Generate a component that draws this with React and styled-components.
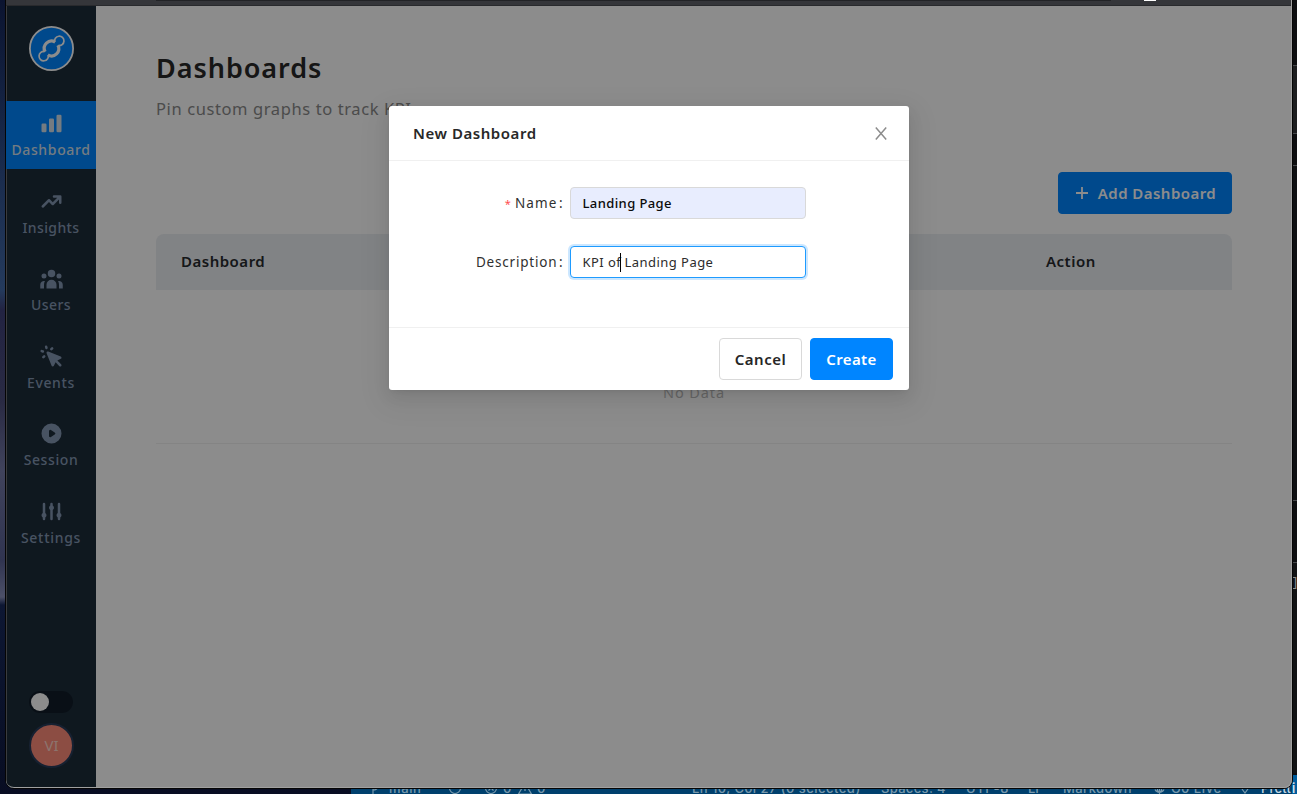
import React from "react";
import styled, { createGlobalStyle } from "styled-components";
import {
  HiChartBar,
  HiTrendingUp,
  HiUserGroup,
  HiCursorClick,
  HiPlay,
  HiAdjustments,
} from "react-icons/hi";

const Global = createGlobalStyle`
  * { box-sizing: border-box; }
  body { margin: 0; overflow: hidden; font-family: "Noto Sans", sans-serif; }
  button, input { font-family: inherit; margin: 0; }
  h1, h2, p { margin: 0; }
`;

const Desktop = styled.div`
  position: relative;
  width: 1297px;
  height: 794px;
  overflow: hidden;
  display: flex;
  background: linear-gradient(180deg, #0b1430 0, #18294a 150px, #243a5c 290px, #222342 310px, #292a43 400px, #40435c 470px, #303450 560px, #4c5068 597px, #0d1733 605px, #080d22 794px);
`;

const StatusBar = styled.footer`
  position: absolute;
  left: 351px;
  top: 775px;
  width: 946px;
  height: 22px;
  background: #00406d;
  color: #7798ac;
  font: 13px/26px Inter, sans-serif;
`;

/* Each entry hangs off the cropped bar below the window. */
const StatusText = styled.span`
  position: absolute;
  left: ${(p) => p.$x - 351}px;
  white-space: pre;
  font-weight: 500;
  letter-spacing: ${(p) => p.$ls || 0}px;
  color: ${(p) => p.$color || "inherit"};
`;

const StatusGlyphs = styled.svg`
  position: absolute;
  left: 0;
  top: 0;
`;

const EditorEdge = styled.aside`
  position: absolute;
  right: 0;
  top: 0;
  width: 6px;
  height: 775px;
  background: #0d0e10;
  color: #8b8b8b;
  font: 13px/16px "Liberation Mono", monospace;
  display: flex;
  flex-direction: column;
  overflow: hidden;
`;

const EditorBlock = styled.div`
  flex: none;
  height: ${(p) => p.$h}px;
  background: ${(p) => p.$bg || "transparent"};
  border-top: 1px solid #46484b;
  padding-top: ${(p) => p.$pt || 0}px;
`;

const EdgeSpacer = styled.div`
  flex: none;
  height: 65px;
`;

const StatusEdge = styled.div`
  position: absolute;
  right: 0;
  top: 775px;
  width: 5px;
  height: 19px;
  background: #005c9c;
  color: #e5eef5;
  font: 500 13px/26px Inter, sans-serif;
  overflow: hidden;
`;

const Window = styled.div`
  position: relative;
  margin-left: 6px;
  width: 1286px;
  height: 788px;
  display: flex;
  flex-direction: column;
  background: #fff;
  border-radius: 0 0 8px 8px;
  overflow: hidden;
  box-shadow: 0 0 0 1px #050505;
`;

const WindowLine = styled.div`
  position: absolute;
  inset: 0;
  border: 1px solid #a0a0a0;
  border-top: 0;
  border-left: 0;
  border-radius: 0 0 8px 8px;
  pointer-events: none;
`;

const BrowserStrip = styled.div`
  flex: none;
  height: 6px;
  background: #35363a;
  border-bottom: 1px solid #292a2d;
  display: flex;
  justify-content: space-between;
  padding: 0 136px 0 150px;
`;

const StripTab = styled.span`
  width: ${(p) => p.$w}px;
  height: 1px;
  background: ${(p) => p.$bg};
`;

const AppArea = styled.div`
  position: relative;
  flex: 1;
  display: flex;
  min-height: 0;
`;

const Sidebar = styled.nav`
  width: 90px;
  background: #1d2c3a;
  box-shadow: inset 1px 0 0 #6a6e73;
  display: flex;
  flex-direction: column;
  align-items: stretch;
  padding-top: 19px;
  padding-bottom: 20px;
`;

const Logo = styled.svg`
  flex: none;
  width: 46px;
  height: 46px;
  margin: 0 auto 30px 22px;
  overflow: visible;
`;

const NavItem = styled.a`
  height: 68px;
  margin-bottom: 9.5px;
  padding-top: 9.5px;
  display: flex;
  flex-direction: column;
  align-items: center;
  color: ${(p) => (p.$active ? "#d3e0ec" : "#8498b2")};
  background: ${(p) => (p.$active ? "#0085ff" : "transparent")};
  font-size: 14px;
  line-height: 20px;
  font-weight: 500;
  letter-spacing: ${(p) => p.$ls}px;
  svg { width: 25px; height: 25px; margin: 0.5px 0 4px 0.5px; }
`;

const NavFoot = styled.div`
  margin-top: auto;
  padding-left: 23px;
  display: flex;
  flex-direction: column;
  gap: 10px;
`;

const Toggle = styled.div`
  width: 44px;
  height: 22px;
  border-radius: 11px;
  background: #111d29;
  padding: 2px;
  &::before {
    content: "";
    display: block;
    width: 18px;
    height: 18px;
    border-radius: 50%;
    background: #fff;
  }
`;

const Avatar = styled.div`
  width: 45px;
  height: 45px;
  border-radius: 50%;
  border: 2px solid #293c5a;
  background: #ff8c7a;
  color: #ffd3c9;
  font-size: 15px;
  line-height: 20px;
  padding-bottom: 1px;
  display: flex;
  align-items: center;
  justify-content: center;
`;

const Main = styled.main`
  flex: 1;
  padding: 44px 60px 0;
  display: flex;
  flex-direction: column;
`;

const Title = styled.h1`
  font-size: 27px;
  line-height: 36px;
  font-weight: 600;
  letter-spacing: 0.95px;
  color: #282828;
`;

const Subtitle = styled.p`
  margin-top: 11px;
  font-size: 16.5px;
  line-height: 24px;
  letter-spacing: 0.6px;
  color: #898989;
`;

const Button = styled.button`
  height: 42px;
  width: ${(p) => p.$w}px;
  border-radius: 4px;
  border: 1px solid ${(p) => (p.$primary ? "#0085ff" : "#d9d9d9")};
  background: ${(p) => (p.$primary ? "#0085ff" : "#fff")};
  color: ${(p) => (p.$primary ? "#fff" : "#262626")};
  font-size: 15px;
  font-weight: 600;
  letter-spacing: ${(p) => p.$ls || 0}px;
  display: flex;
  align-items: center;
  justify-content: center;
  gap: 9px;
  padding: 0;
  white-space: nowrap;
`;

const AddButton = styled(Button)`
  margin: 51px 0 20px auto;
  padding-left: 1px;
`;

const TableHead = styled.div`
  height: 56px;
  padding: 0 25px 2px;
  border-radius: 8px 8px 0 0;
  background: #ebeef2;
  display: grid;
  grid-template-columns: 865px 1fr;
  align-items: center;
  font-size: 15px;
  font-weight: 600;
  letter-spacing: 0.5px;
  color: #272a2e;
`;

const Empty = styled.div`
  height: 154px;
  border-bottom: 1px solid #f0f0f0;
  padding-top: 91px;
  text-align: center;
  font-size: 14.5px;
  line-height: 22px;
  letter-spacing: 0.9px;
  color: #bcbcbc;
`;

const Mask = styled.div`
  position: absolute;
  inset: 0;
  background: rgba(0, 0, 0, 0.45);
`;

const Modal = styled.section`
  position: absolute;
  left: 383px;
  top: 100px;
  width: 520px;
  height: 284px;
  background: #fff;
  border-radius: 3px;
  box-shadow: 0 3px 6px -4px rgba(0, 0, 0, 0.12), 0 6px 16px rgba(0, 0, 0, 0.08),
    0 9px 28px 8px rgba(0, 0, 0, 0.05);
  display: flex;
  flex-direction: column;
`;

const ModalHead = styled.header`
  height: 55px;
  padding: 0 22px 0 24px;
  border-bottom: 1px solid #f0f0f0;
  display: flex;
  align-items: center;
  justify-content: space-between;
`;

const ModalTitle = styled.h2`
  font-size: 15px;
  line-height: 22px;
  font-weight: 600;
  letter-spacing: 0.55px;
  color: #282828;
`;

const ModalBody = styled.div`
  flex: 1;
  padding-top: 26px;
  display: flex;
  flex-direction: column;
  gap: 27px;
`;

const Field = styled.label`
  display: grid;
  grid-template-columns: 173.5px 236px;
  column-gap: 7.5px;
  align-items: center;
`;

const FieldName = styled.span`
  text-align: right;
  font-size: 13.5px;
  letter-spacing: ${(p) => p.$ls}px;
  color: #303030;
  white-space: nowrap;
`;

const Colon = styled.span`
  margin-left: 1.5px;
  letter-spacing: 0;
`;

const Required = styled.span`
  color: #ff4d4f;
  font-size: 11px;
  margin-right: 4px;
  letter-spacing: 0;
`;

const Input = styled.div`
  height: 32px;
  padding: 0 11.5px;
  border: 1px solid ${(p) => (p.$focused ? "#1e9bff" : "#d9d9d9")};
  border-radius: 4px;
  background: ${(p) => (p.$filled ? "#e8edfe" : "#fff")};
  box-shadow: ${(p) => (p.$focused ? "0 0 0 2px rgba(0, 133, 255, 0.2)" : "none")};
  color: ${(p) => (p.$filled ? "#0a0a0a" : "#2c2c2c")};
  font-size: 13px;
  font-weight: ${(p) => (p.$filled ? 500 : 400)};
  letter-spacing: ${(p) => p.$ls}px;
  display: flex;
  align-items: center;
  white-space: pre;
`;

const Caret = styled.span`
  width: 1px;
  height: 19px;
  margin: 0 0 0 -1.5px;
  background: #000;
`;

const ModalFoot = styled.footer`
  height: 63px;
  border-top: 1px solid #f0f0f0;
  padding: 10px 16px;
  display: flex;
  justify-content: flex-end;
  gap: 8px;
`;

const NAV = [
  ["Dashboard", HiChartBar, 0.65, true],
  ["Insights", HiTrendingUp, 0.4],
  ["Users", HiUserGroup, 0.4],
  ["Events", HiCursorClick, 0.6],
  ["Session", HiPlay, 0.6],
  ["Settings", HiAdjustments, 0.7],
];

function BrandMark() {
  return (
    <Logo viewBox="-0.5 -0.500 46 46" fill="none">
      <circle cx="23" cy="23" r="21.6" fill="#0085ff" stroke="#fff" strokeWidth="1.8" />
      <path d="M26.6 16.600A7.200 7.200 0 0 0 16.600 26.200" stroke="#fff" strokeWidth="3.2" />
      <path d="M19.400 29.400A7.200 7.200 0 0 0 29.400 19.800" stroke="#fff" strokeWidth="3.2" />
      <path
        d="M26.200 16.600a4.700 4.700 0 1 1 3.600 3.400M19.800 29.400a4.700 4.700 0 1 1-3.600-3.400"
        stroke="#fff"
        strokeWidth="1.7"
      />
    </Logo>
  );
}

export default function App() {
  return (
    <>
      <Global />
      <Desktop>
        <EditorEdge>
          <EdgeSpacer />
          <EditorBlock $h={68} $bg="#1c1d1f" />
          <EditorBlock $h={32} />
          <EditorBlock $h={335} $bg="#0f1012" />
          <EditorBlock $h={62} />
          <EditorBlock $h={211} $pt={12} $bg="#111214">]</EditorBlock>
        </EditorEdge>
        <StatusBar>
          <StatusGlyphs width="946" height="22" fill="none" stroke="#7798ac" strokeWidth="1.2">
            <circle cx="28" cy="10" r="2" />
            <path d="M27 12q-1 3-5 3M22 12v7" />
            <circle cx="104" cy="13" r="5.5" />
            <circle cx="140" cy="13" r="5.5" />
            <path d="m137.500 10.500 5 5m0-5-5 5" />
            <path d="M174 8l-6.500 11h13zM174 12v4" />
            <path d="M804 14.500a5 5 0 0 0 9 0M806.500 11.500v4l2 2 2-2v-4M808.500 13v6" />
            <path d="m891 14 3 4 5-7" />
          </StatusGlyphs>
          <StatusText $x={389} $ls={0.6}>main</StatusText>
          <StatusText $x={503}>0</StatusText>
          <StatusText $x={537}>0</StatusText>
          <StatusText $x={692} $ls={0.45}>Ln 10, Col 27 (0 selected)</StatusText>
          <StatusText $x={881} $ls={0.3}>Spaces: 4</StatusText>
          <StatusText $x={966} $ls={0.6}>UTF-8</StatusText>
          <StatusText $x={1028}>LF</StatusText>
          <StatusText $x={1063} $ls={0.4}>Markdown</StatusText>
          <StatusText $x={1171} $ls={0.6}>Go Live</StatusText>
          <StatusText $x={1261} $ls={0.2} $color="#c4d6e2">Prett</StatusText>
        </StatusBar>
        <StatusEdge>i</StatusEdge>
        <Window>
          <BrowserStrip>
            <StripTab $w={955} $bg="#222326" />
            <StripTab $w={12} $bg="#ffffff" />
          </BrowserStrip>
          <AppArea>
            <Sidebar>
              <BrandMark />
              {NAV.map(([label, Icon, ls, active]) => (
                <NavItem key={label} $active={active} $ls={ls}>
                  <Icon />
                  {label}
                </NavItem>
              ))}
              <NavFoot>
                <Toggle />
                <Avatar>VI</Avatar>
              </NavFoot>
            </Sidebar>
            <Main>
              <Title>Dashboards</Title>
              <Subtitle>Pin custom graphs to track KPI</Subtitle>
              <AddButton $primary $w={174} $ls={0.45}>
                <svg width="14" height="14" stroke="#fff" strokeWidth="1.8">
                  <path d="M7 1v12M1 7h12" />
                </svg>
                Add Dashboard
              </AddButton>
              <TableHead>
                <span>Dashboard</span>
                <span>Action</span>
              </TableHead>
              <Empty>No Data</Empty>
            </Main>
            <Mask />
            <Modal>
              <ModalHead>
                <ModalTitle>New Dashboard</ModalTitle>
                <svg width="12" height="13" stroke="#8c8c8c" strokeWidth="1.5" fill="none">
                  <path d="M.8.5 11.200 12.500M11.200.5.8 12.500" />
                </svg>
              </ModalHead>
              <ModalBody>
                <Field>
                  <FieldName $ls={1.1}>
                    <Required>*</Required>Name<Colon>:</Colon>
                  </FieldName>
                  <Input $filled $ls={0.4}>Landing Page</Input>
                </Field>
                <Field>
                  <FieldName $ls={0.8}>Description<Colon>:</Colon></FieldName>
                  <Input $focused $ls={0.45}>
                    KPI of<Caret /> Landing Page
                  </Input>
                </Field>
              </ModalBody>
              <ModalFoot>
                <Button $w={83} $ls={0.5}>Cancel</Button>
                <Button $w={83} $primary $ls={0.4}>Create</Button>
              </ModalFoot>
            </Modal>
          </AppArea>
          <WindowLine />
        </Window>
      </Desktop>
    </>
  );
}
